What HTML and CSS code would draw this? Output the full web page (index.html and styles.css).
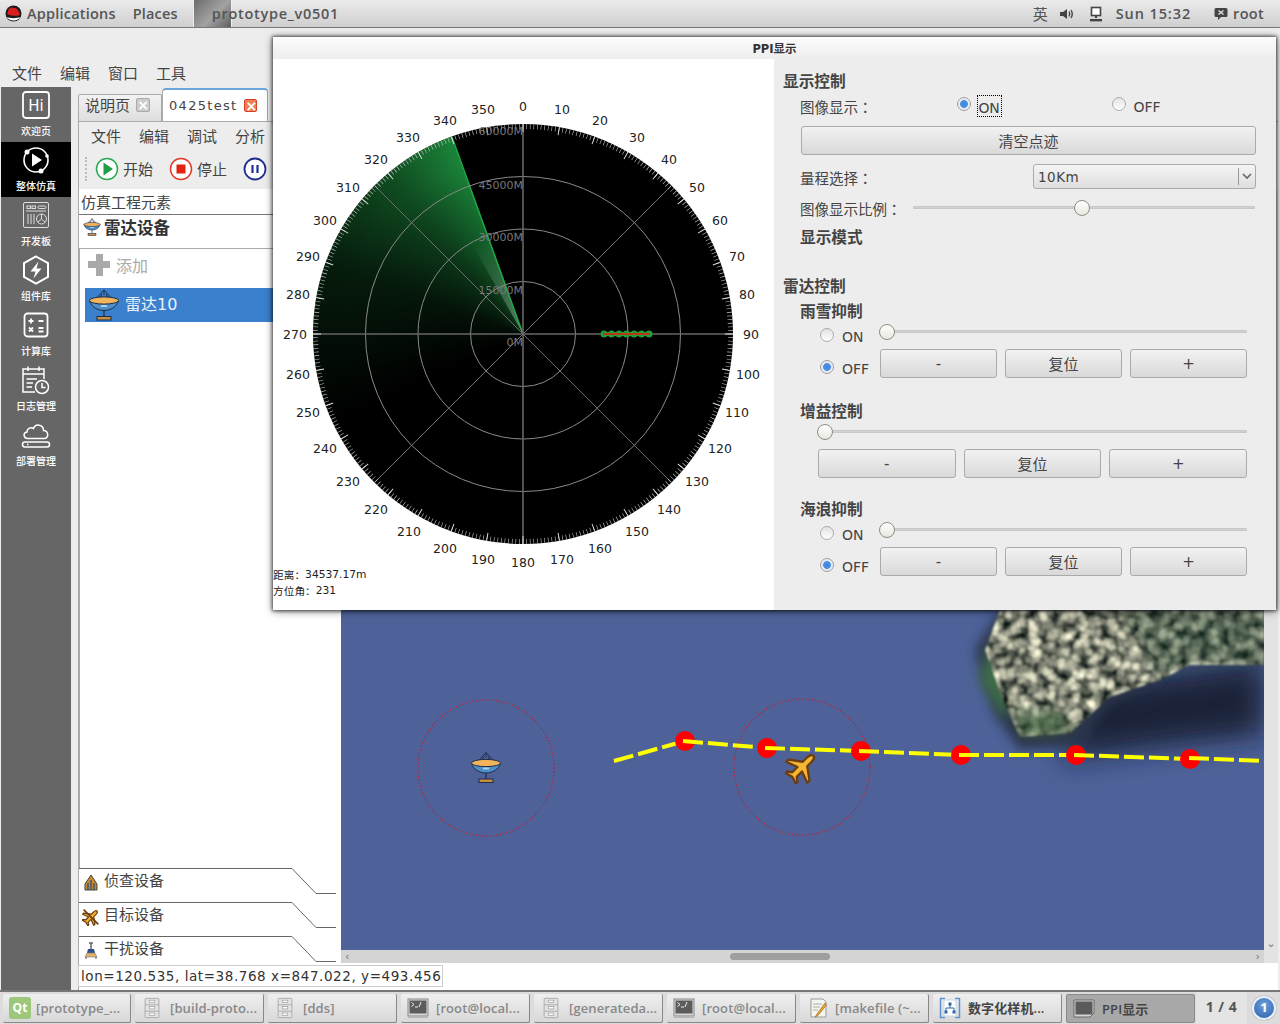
FILE: index.html
```html
<!DOCTYPE html>
<html lang="zh">
<head>
<meta charset="utf-8">
<title>PPI显示</title>
<link rel="stylesheet" href="styles.css">
</head>
<body>
<svg class="defs" width="0" height="0">
  <defs>
    <symbol id="dish" viewBox="0 0 32 32">
      <path d="M16 1L7 11M16 1L25 11M16 1V6M11 11L14 5M21 11L18 5" fill="none" stroke="#1d2d4a" stroke-width="1"/>
      <path d="M1.5 11.5C3 18 10 21.5 16 21.5S29 18 30.5 11.5Z" fill="#4d8fc7" stroke="#1d2d4a"/>
      <ellipse cx="16" cy="11.5" rx="14.5" ry="3.6" fill="#f2b35a" stroke="#1d2d4a"/>
      <rect x="13" y="16" width="6" height="2" fill="#a9d0ee"/>
      <path d="M16 21.5V28" stroke="#1d2d4a" stroke-width="1.2"/>
      <rect x="9" y="27.5" width="14" height="3.5" fill="#c88f3e" stroke="#1d2d4a"/>
    </symbol>
    <symbol id="plane" viewBox="0 0 32 32">
      <path transform="rotate(45 16 16)" d="M16 1C18 1 19 4 19 7V12L30 20V23L19 19V26L23 29V31L16 29L9 31V29L13 26V19L2 23V20L13 12V7C13 4 14 1 16 1Z" fill="#f5b632" stroke="#6b3d10" stroke-width="2.200" stroke-linejoin="round"/>
    </symbol>
    <symbol id="cabinet" viewBox="0 0 18 24">
      <rect x="1.5" y="1.5" width="15" height="21" rx="1" fill="#e4e4e4" stroke="#a8a8a8"/>
      <path d="M1.5 8.5H16.5M1.5 15.5H16.5" stroke="#a8a8a8"/>
      <rect x="6" y="3.5" width="6" height="2.5" fill="#fff" stroke="#a0a0a0" stroke-width=".8"/>
      <rect x="6" y="10.5" width="6" height="2.5" fill="#fff" stroke="#a0a0a0" stroke-width=".8"/>
      <rect x="6" y="17.5" width="6" height="2.5" fill="#fff" stroke="#a0a0a0" stroke-width=".8"/>
    </symbol>
    <symbol id="term" viewBox="0 0 22 22">
      <rect x="1" y="2" width="20" height="17" fill="#d8d8d8" stroke="#888"/>
      <rect x="2.5" y="3.5" width="17" height="13" fill="#5c5c5c"/>
      <path d="M4.5 5.5L7 7.5L4.5 9.5M8 10H11M14 5L12 10" stroke="#eee" fill="none"/>
      <rect x="1" y="19" width="20" height="2" fill="#b5b5b5"/>
    </symbol>
  </defs>
</svg>

<header class="topbar">
  <svg class="redhat" width="17" height="17" viewBox="0 0 17 17"><circle cx="8.500" cy="8.500" r="8" fill="#1c1c1c"/><path d="M1.500 12C4 16.500 13 16.500 15.500 12C12 13.500 5 13.500 1.500 12Z" fill="#fff"/><path d="M2.500 9.500C2.500 6 4 2.500 6.500 2.500C7.500 2.500 8 3 9.500 3C12 2.500 13.500 6.500 15 9C15.500 11 9 11.500 2.500 9.500Z" fill="#d9201f"/></svg>
  <span class="topbar-menu topbar-apps">Applications</span>
  <span class="topbar-menu topbar-places">Places</span>
  <span class="topbar-thumb"></span>
  <span class="topbar-title">prototype_v0501</span>
  <span class="topbar-spacer"></span>
  <span class="tray-ime">英</span>
  <svg class="tray-sound" width="16" height="14" viewBox="0 0 16 14"><path d="M1 5H4L8 2V12L4 9H1Z" fill="#444"/><path d="M10 4.5Q11.5 7 10 9.5M12 3Q14.5 7 12 11" fill="none" stroke="#444" stroke-width="1.4"/></svg>
  <svg class="tray-net" width="14" height="16" viewBox="0 0 14 16"><rect x="2.5" y="1.5" width="9" height="8" fill="#fff" stroke="#444" stroke-width="1.6"/><path d="M7 10V12" stroke="#444" stroke-width="2"/><rect x="1" y="13" width="12" height="2.4" fill="#444"/></svg>
  <span class="tray-clock">Sun 15:32</span>
  <svg class="tray-chat" width="14" height="14" viewBox="0 0 14 14"><path d="M2 1H12Q13.500 1 13.500 2.500V8.500Q13.500 10 12 10H7L4 13V10H2Q.5 10 .5 8.500V2.500Q.5 1 2 1Z" fill="#444"/><path d="M4.500 3.500L9.500 7.500M9.500 3.500L4.500 7.500" stroke="#ddd" stroke-width="1.500"/></svg>
  <span class="tray-user">root</span>
</header>

<main class="appwin">
  <nav class="menubar"><span>文件</span><span>编辑</span><span>窗口</span><span>工具</span></nav>
  <div class="appbody">
    <aside class="sidebar">
      <div class="side-item">
        <svg class="side-icon" viewBox="0 0 30 30"><rect x="2" y="2" width="26" height="26" rx="3" fill="none" stroke="#fff" stroke-width="1.800"/><text x="15" y="20.500" class="hi-text">Hi</text></svg>
        <span>欢迎页</span>
      </div>
      <div class="side-item side-item-active">
        <svg class="side-icon" viewBox="0 0 30 30"><circle cx="15" cy="15" r="12" fill="none" stroke="#fff" stroke-width="1.600"/><path d="M11 8.500L21 15L11 21.500Z" fill="#fff"/><circle cx="6" cy="7" r="2.500" fill="#fff"/><circle cx="26" cy="11" r="1.800" fill="#fff"/><circle cx="20" cy="26" r="2.500" fill="#fff"/></svg>
        <span>整体仿真</span>
      </div>
      <div class="side-item">
        <svg class="side-icon" viewBox="0 0 30 30" fill="none" stroke="#ddd"><rect x="2.500" y="2.500" width="25" height="25" rx="1.500"/><rect x="6" y="6" width="3.500" height="2.500"/><rect x="11" y="6" width="3.500" height="2.500"/><rect x="17" y="6" width="8" height="2.500" rx="1.200"/><path d="M5 11H25M7 14V24M10 14V24M13 14V24"/><circle cx="20.500" cy="19" r="5"/><path d="M20.500 14V19L24 22M20.500 19L17 22"/></svg>
        <span>开发板</span>
      </div>
      <div class="side-item">
        <svg class="side-icon" viewBox="0 0 30 30"><path d="M15 1.500L27 8.200V21.800L15 28.500L3 21.800V8.200Z" fill="none" stroke="#fff" stroke-width="2"/><path d="M17.500 6.500L9.500 16.500H14.500L12.500 23.500L20.500 13.500H15.500Z" fill="#fff"/></svg>
        <span>组件库</span>
      </div>
      <div class="side-item">
        <svg class="side-icon" viewBox="0 0 30 30" fill="none" stroke="#fff" stroke-width="1.800"><rect x="3.500" y="3.500" width="23" height="23" rx="3"/><path d="M7.500 11H12.500M10 8.500V13.500M17.500 11H22.500M8 17.500L12 21.500M12 17.500L8 21.500M17.500 18H22.500M17.500 21.500H22.500"/></svg>
        <span>计算库</span>
      </div>
      <div class="side-item">
        <svg class="side-icon" viewBox="0 0 30 30" fill="none" stroke="#fff" stroke-width="1.500"><path d="M23 14V4H2V27H14"/><path d="M2 9H23M7 1.500V6M18 1.500V6M5.500 14H16M5.500 18H12M5.500 22H11"/><circle cx="21" cy="22" r="6.500"/><path d="M21 18V22.500H24.500"/></svg>
        <span>日志管理</span>
      </div>
      <div class="side-item">
        <svg class="side-icon" viewBox="0 0 30 30" fill="none" stroke="#fff" stroke-width="1.500"><path d="M7 18.500C2.500 18.500 1.500 13 6 12C6 8.500 10 6.500 12.500 8.500C14.500 3 22.500 4.500 22.500 10.500C27.500 10.500 28.500 18.500 23 18.500Z"/><rect x="1.500" y="22" width="27" height="5" rx="2.500"/><path d="M6 24.500H7.500"/></svg>
        <span>部署管理</span>
      </div>
    </aside>

    <section class="workspace">
      <div class="tabs">
        <div class="tab"><span>说明页</span><span class="tab-close"></span></div>
        <div class="tab tab-active"><span class="tab-name">0425test</span><span class="tab-close tab-close-hot"></span></div>
      </div>
      <div class="tabpanel">
        <nav class="submenu"><span>文件</span><span>编辑</span><span>调试</span><span>分析</span></nav>
        <div class="toolbar">
          <span class="grip"></span>
          <svg class="tool-icon" viewBox="0 0 24 24"><circle cx="12" cy="12" r="10.500" fill="#fff" stroke="#2aa952" stroke-width="1.500"/><path d="M8.500 5.500L18 12L8.500 18.500Z" fill="#1f9e46"/></svg>
          <span class="tool-label">开始</span>
          <svg class="tool-icon tool-stop" viewBox="0 0 24 24"><circle cx="12" cy="12" r="10.500" fill="#fff" stroke="#e23b2a" stroke-width="1.500"/><rect x="7.500" y="7.500" width="9" height="9" fill="#e0240f"/></svg>
          <span class="tool-label">停止</span>
          <svg class="tool-icon tool-pause" viewBox="0 0 24 24"><circle cx="12" cy="12" r="10.500" fill="#fff" stroke="#1f2f8f" stroke-width="1.800"/><path d="M9.500 8V16M14.500 8V16" stroke="#1f2f8f" stroke-width="2.200"/></svg>
        </div>
        <div class="split">
          <div class="tree">
            <div class="tree-title">仿真工程元素</div>
            <div class="tree-head"><svg class="tree-head-icon"><use href="#dish"/></svg><b>雷达设备</b></div>
            <div class="tree-list">
              <div class="tree-add"><span class="plus"></span><span>添加</span></div>
              <div class="tree-row"><svg class="tree-row-icon"><use href="#dish"/></svg><span>雷达10</span></div>
            </div>
            <div class="drawer">
              <svg class="drawer-line" viewBox="0 0 257 26"><path d="M0 .5H213L237 25.500H257" fill="none" stroke="#666"/></svg>
              <svg class="drawer-icon" viewBox="0 0 18 18"><path d="M9 1L15 10V16H3V10Z" fill="#c98a2a" stroke="#444"/><path d="M6 9V16M9 6V16M12 9V16" stroke="#2d4f86" stroke-width="1.300"/></svg>
              <span>侦查设备</span>
            </div>
            <div class="drawer">
              <svg class="drawer-line" viewBox="0 0 257 26"><path d="M0 .5H213L237 25.500H257" fill="none" stroke="#666"/></svg>
              <svg class="drawer-icon" viewBox="0 0 32 32"><use href="#plane"/><path d="M3 3L29 29" stroke="#6b3d10" stroke-width="3"/></svg>
              <span>目标设备</span>
            </div>
            <div class="drawer drawer-last">
              <svg class="drawer-line" viewBox="0 0 257 26"><path d="M0 .5H213L237 25.500H257" fill="none" stroke="#666"/></svg>
              <svg class="drawer-icon" viewBox="0 0 18 18"><path d="M9 1V7M7 1H11" stroke="#666" stroke-width="1.500"/><path d="M6 7H12L13 11H5Z" fill="#2d4f86"/><path d="M3 15H15L13 11H5Z" fill="#e4b169" stroke="#777" stroke-width=".6"/><path d="M4 15V17M14 15V17" stroke="#555"/></svg>
              <span>干扰设备</span>
            </div>
          </div>
          <div class="mapwrap">
            <svg class="map" viewBox="341 189 923 761" preserveAspectRatio="none">
              <defs>
                <filter id="blur14" x="-30%" y="-30%" width="160%" height="160%"><feGaussianBlur stdDeviation="14"/></filter>
                <filter id="blur6" x="-30%" y="-30%" width="160%" height="160%"><feGaussianBlur stdDeviation="6"/></filter>
                <filter id="land" x="-5%" y="-5%" width="110%" height="110%" color-interpolation-filters="sRGB">
                  <feTurbulence type="fractalNoise" baseFrequency=".1" numOctaves="3" seed="23" result="n"/>
                  <feColorMatrix in="n" type="matrix" values="1.800 0 0 0 -.5  1.700 0 0 0 -.43  1.500 0 0 0 -.38  0 0 0 0 1"/>
                  <feMorphology operator="dilate" radius="1"/>
                  <feComposite in2="SourceGraphic" operator="in"/>
                  <feGaussianBlur stdDeviation="1"/>
                </filter>
              </defs>
              <rect x="341" y="189" width="923" height="761" fill="#4e6299"/>
              <path d="M1090 685L1264 660V735L1170 745L1060 760Z" fill="#161b2e" opacity=".9" filter="url(#blur14)"/>
              <path d="M1000 610L975 650L995 715L1020 750L1075 745L1110 700L1160 680V610Z" fill="#2c3648" filter="url(#blur6)"/>
              <path d="M990 645L978 680L1005 720L1015 690Z" fill="#3c6a4a" filter="url(#blur6)"/>
              <path d="M1000 610L985 650L1003 700L1020 737L1070 733L1110 697L1160 680L1190 665H1264V610Z" fill="#777" filter="url(#land)"/>
              <path d="M1125 610H1264V665H1190L1160 675Z" fill="#24402f" opacity=".45" filter="url(#blur6)"/>
              <path d="M1012 712L1024 738L1070 732L1062 712Z" fill="#3b5e3c" opacity=".7" filter="url(#blur6)"/>
              <circle class="range" cx="486" cy="768" r="68"/>
              <circle class="range" cx="802" cy="767" r="68"/>
              <use href="#dish" x="470" y="751" width="32" height="33"/>
              <use href="#plane" x="785" y="750" width="34" height="34"/>
              <path class="route" d="M614 761L685 741"/>
              <circle class="way" cx="685" cy="741" r="10"/>
              <path class="route" d="M683 741L767 748"/>
              <circle class="way" cx="767" cy="748" r="10"/>
              <path class="route" d="M765 748L861 751"/>
              <circle class="way" cx="861" cy="751" r="10"/>
              <path class="route" d="M859 751L961 755"/>
              <circle class="way" cx="961" cy="755" r="10"/>
              <path class="route" d="M959 755L1076 755"/>
              <circle class="way" cx="1076" cy="755" r="10"/>
              <path class="route" d="M1074 755L1190 759"/>
              <circle class="way" cx="1190" cy="759" r="10"/>
              <path class="route" d="M1189 758L1264 761"/>
            </svg>
            <div class="vscroll"><span class="chev">⌄</span></div>
            <div class="hscroll"><span class="hchev">‹</span><span class="hthumb"></span><span class="hchev">›</span></div>
            <div class="corner"></div>
          </div>
        </div>
        <div class="statusrow"><div class="statusbox">lon=120.535, lat=38.768 x=847.022, y=493.456</div></div>
      </div>
    </section>
  </div>
</main>

<footer class="taskbar">
  <div class="task"><span class="qt">Qt</span><span class="task-text">[prototype_...</span></div>
  <div class="task"><svg class="task-icon"><use href="#cabinet"/></svg><span class="task-text">[build-proto...</span></div>
  <div class="task"><svg class="task-icon"><use href="#cabinet"/></svg><span class="task-text">[dds]</span></div>
  <div class="task"><svg class="task-icon"><use href="#term"/></svg><span class="task-text">[root@local...</span></div>
  <div class="task"><svg class="task-icon"><use href="#cabinet"/></svg><span class="task-text">[generateda...</span></div>
  <div class="task"><svg class="task-icon"><use href="#term"/></svg><span class="task-text">[root@local...</span></div>
  <div class="task"><svg class="task-icon" viewBox="0 0 22 22"><path d="M5 2H17L20 5V20H5Z" fill="#f5f5f0" stroke="#999"/><path d="M7 7H16M7 10H14M7 13H12" stroke="#aaa"/><path d="M19 6L11 17L9 20L12 18.500L20.500 8Z" fill="#e9a33a" stroke="#a26a1c" stroke-width=".7"/></svg><span class="task-text">[makefile (~...</span></div>
  <div class="task"><svg class="task-icon" viewBox="0 0 22 22" fill="none"><path d="M6 1.500H1.500V20.500H6M16 1.500H20.500V20.500H16" stroke="#5d93cf" stroke-width="1.500"/><rect x="5" y="3" width="12" height="16" fill="#fff" stroke="#c9d6e6"/><path d="M11 7V11M7 14V11H15V14" stroke="#2f66a8"/><rect x="9.500" y="5.500" width="3" height="3" fill="#2f66a8"/><rect x="5.500" y="13.500" width="3" height="3" fill="#2f66a8"/><rect x="13.500" y="13.500" width="3" height="3" fill="#2f66a8"/></svg><span class="task-text task-text-dark">数字化样机...</span></div>
  <div class="task task-active"><svg class="task-icon" viewBox="0 0 22 22"><path d="M1 3H21V16L17 20H1Z" fill="#d5d5d5" stroke="#666"/><rect x="2.500" y="4.500" width="17" height="13" fill="#5a5a5a"/></svg><span class="task-text task-text-dark">PPI显示</span></div>
  <div class="pager">1 / 4</div>
  <div class="badge">1</div>
</footer>

<div class="dialog">
  <div class="dialog-title">PPI显示</div>
  <div class="dialog-body">
    <svg class="radar" viewBox="273 59 501 551">
      <defs>
        <linearGradient id="glow" gradientUnits="userSpaceOnUse" x1="523" y1="334" x2="488" y2="240">
          <stop offset="0" stop-color="#cfeeda" stop-opacity=".4"/>
          <stop offset="1" stop-color="#cfeeda" stop-opacity="0"/>
        </linearGradient>
      </defs>
      <circle cx="523" cy="334" r="210" fill="#000"/>
      <foreignObject x="313" y="124" width="420" height="420"><div class="sweep"></div></foreignObject>
      <path d="M523 334L488 238L472 244Z" fill="url(#glow)"/>
      <path d="M523 334L452 137" stroke="#1fa94a" stroke-width="1.500"/>
      <g class="rings">
        <circle cx="523" cy="334" r="52.500"/>
        <circle cx="523" cy="334" r="105"/>
        <circle cx="523" cy="334" r="157.500"/>
      </g>
      <g class="spokes">
        <path d="M374.500 185.500L671.500 482.500M671.500 185.500L374.500 482.500"/>
      </g>
      <path class="axis" d="M523 124V544M313 334H733"/>
      <circle class="ticks" cx="523" cy="334" r="207.500" pathLength="360"/>
      <circle class="ticks-major" cx="523" cy="334" r="206" pathLength="36"/>
      <g class="dist">
        <text x="523" y="131">60000M</text>
        <text x="523" y="185">45000M</text>
        <text x="523" y="237">30000M</text>
        <text x="523" y="290">15000M</text>
        <text x="523" y="342">0M</text>
      </g>
      <path class="trace-g" d="M604 334H649"/>
      <g class="trace-dots">
        <circle cx="604" cy="334" r="3.500"/><circle cx="611.500" cy="334" r="3.500"/><circle cx="619" cy="334" r="3.500"/><circle cx="626.500" cy="334" r="3.500"/><circle cx="634" cy="334" r="3.500"/><circle cx="641.500" cy="334" r="3.500"/><circle cx="649" cy="334" r="3.500"/>
      </g>
      <path class="trace-r" d="M603 334H650"/>
      <g class="deg">
        <text x="523" y="106">0</text><text x="562" y="109">10</text><text x="600" y="120">20</text><text x="637" y="137">30</text>
        <text x="669" y="159">40</text><text x="697" y="187">50</text><text x="720" y="220">60</text><text x="737" y="256">70</text>
        <text x="747" y="294">80</text><text x="751" y="334">90</text><text x="748" y="374">100</text><text x="737" y="412">110</text>
        <text x="720" y="448">120</text><text x="697" y="481">130</text><text x="669" y="509">140</text><text x="637" y="531">150</text>
        <text x="600" y="548">160</text><text x="562" y="559">170</text><text x="523" y="562">180</text><text x="483" y="559">190</text>
        <text x="445" y="548">200</text><text x="409" y="531">210</text><text x="376" y="509">220</text><text x="348" y="481">230</text>
        <text x="325" y="448">240</text><text x="308" y="412">250</text><text x="298" y="374">260</text><text x="295" y="334">270</text>
        <text x="298" y="294">280</text><text x="308" y="256">290</text><text x="325" y="220">300</text><text x="348" y="187">310</text>
        <text x="376" y="159">320</text><text x="408" y="137">330</text><text x="445" y="120">340</text><text x="483" y="109">350</text>
      </g>
      <text class="readout" x="273" y="574"><tspan class="readout-cn">距离：</tspan>34537.17m</text>
      <text class="readout" x="273" y="590"><tspan class="readout-cn">方位角：</tspan>231</text>
    </svg>

    <div class="controls">
      <h3 class="h-main h-first">显示控制</h3>
      <div class="row-image">
        <span class="label" lang="zh-TW">图像显示：</span>
        <span class="radio radio-on radio-a"></span>
        <span class="focus-on">ON</span>
        <span class="radio radio-b"></span>
        <span class="opt-off">OFF</span>
      </div>
      <button class="btn btn-clear">清空点迹</button>
      <div class="row-range">
        <span class="label" lang="zh-TW">量程选择：</span>
        <div class="combo"><span class="combo-value">10Km</span><span class="combo-arrow"><svg width="10" height="7" viewBox="0 0 10 7"><path d="M1 1L5 5L9 1" fill="none" stroke="#666" stroke-width="1.600"/></svg></span></div>
      </div>
      <div class="row-ratio">
        <span class="label" lang="zh-TW">图像显示比例：</span>
        <div class="slider slider-ratio"><span class="thumb" style="left:161px"></span></div>
      </div>
      <h4 class="h-sub h-mode">显示模式</h4>

      <h3 class="h-main h-radar">雷达控制</h3>
      <h4 class="h-sub h-rain">雨雪抑制</h4>
      <div class="ctl-grid">
        <div class="opt opt-top"><span class="radio"></span><span class="opt-text">ON</span></div>
        <div class="slider slider-wide"><span class="thumb" style="left:-1px"></span></div>
        <div class="opt opt-bottom"><span class="radio radio-on"></span><span class="opt-text">OFF</span></div>
        <div class="btn-row"><button class="btn">-</button><button class="btn">复位</button><button class="btn">+</button></div>
      </div>

      <h4 class="h-sub h-gain">增益控制</h4>
      <div class="gain">
        <div class="slider slider-gain"><span class="thumb" style="left:-1px"></span></div>
        <div class="btn-row"><button class="btn">-</button><button class="btn">复位</button><button class="btn">+</button></div>
      </div>

      <h4 class="h-sub h-wave">海浪抑制</h4>
      <div class="ctl-grid">
        <div class="opt opt-top"><span class="radio"></span><span class="opt-text">ON</span></div>
        <div class="slider slider-wide"><span class="thumb" style="left:-1px"></span></div>
        <div class="opt opt-bottom"><span class="radio radio-on"></span><span class="opt-text">OFF</span></div>
        <div class="btn-row"><button class="btn">-</button><button class="btn">复位</button><button class="btn">+</button></div>
      </div>
    </div>
  </div>
</div>
</body>
</html>
```
FILE: styles.css
```css
* { box-sizing: border-box; }
html, body { margin: 0; padding: 0; }
body {
  width: 1280px; height: 1024px; overflow: hidden; position: relative;
  display: flex; flex-direction: column;
  font-family: "DejaVu Sans", "Noto Sans CJK SC", sans-serif;
  font-size: 15px; color: #444; background: #ededed;
}
.defs { position: absolute; }

/* top bar */
.topbar {
  height: 28px; flex: none; display: flex; align-items: center;
  background: linear-gradient(#ebebeb, #cfcfcf); border-bottom: 1px solid #777;
  font-family: "Open Sans", "Noto Sans CJK SC", sans-serif; font-weight: 600; font-size: 14.500px; color: #555;
}
.redhat { margin-left: 5px; flex: none; }
.topbar-apps { margin-left: 5px; letter-spacing: .2px; }
.topbar-places { margin-left: 17px; letter-spacing: .2px; }
.topbar-thumb {
  width: 39px; height: 27px; margin-left: 15px; flex: none;
  background: linear-gradient(135deg, #6c6c6c, #a2a2a2 55%, #5e5e5e);
  border-left: 1px solid #eee; border-right: 1px solid #eee;
}
.topbar-title { margin-left: -20px; letter-spacing: .7px; }
.topbar-spacer { flex: 1; }
.tray-ime { width: 16px; font-size: 15px; font-weight: 400; margin-right: 10px; }
.tray-sound { margin-right: 14px; }
.tray-net { margin-right: 13px; }
.tray-clock { letter-spacing: .9px; margin-right: 23px; }
.tray-chat { margin-right: 5px; }
.tray-user { margin-right: 16px; letter-spacing: .3px; }

/* application window */
.appwin { height: 962px; flex: none; display: flex; flex-direction: column; background: #ededed; }
.menubar { height: 59px; flex: none; display: flex; align-items: flex-end; gap: 18px; padding: 0 0 3px 12px; line-height: 20px; }
.appbody { flex: 1; display: flex; min-height: 0; }

.sidebar { width: 70px; margin-left: 1px; flex: none; background: #666; color: #fff; font-size: 10px; }
.side-item { height: 55px; display: flex; flex-direction: column; align-items: center; padding-top: 3px; }
.side-item span { margin-top: 5px; line-height: 14px; font-weight: 500; }
.side-item-active { background: #000; }
.side-icon { width: 30px; height: 30px; display: block; }
.hi-text { fill: #fff; font-size: 15px; font-weight: 400; text-anchor: middle; font-family: "DejaVu Sans", sans-serif; }

.workspace { margin: 0 2px 0 7px; flex: 1; min-width: 0; display: flex; flex-direction: column; }
.tabs { height: 34px; flex: none; display: flex; align-items: flex-end; }
.tab {
  width: 84px; height: 27px; display: flex; align-items: center; gap: 6px; padding: 0 0 7px 6px;
  background: linear-gradient(#f2f2f2, #dedede); border: 1px solid #aaa; border-bottom: 0; border-radius: 2px 2px 0 0;
}
.tab-active {
  width: 106px; height: 33px; background: #fff; border-top: 2px solid #6aa5dc; border-color: #6aa5dc #aaa transparent #aaa;
  padding: 0 0 0 6px; gap: 7px; border-radius: 4px 4px 0 0;
}
.tab-name { font-size: 13px; letter-spacing: 1.300px; }
.tab-close { width: 14px; height: 14px; flex: none; border: 1px solid #aaa; border-radius: 2px; background: #ccc; position: relative; }
.tab-close::before { content: "×"; position: absolute; inset: 0; text-align: center; color: #fff; font-size: 14px; line-height: 12px; font-weight: 700; }
.tab-close-hot { width: 13px; height: 13px; background: #ee8058; border-color: #d9402a; }

.tabpanel { flex: 1; min-height: 0; display: flex; flex-direction: column; background: #fff; border-left: 1px solid #aaa; border-top: 1px solid #aaa; }
.submenu { height: 28px; flex: none; display: flex; align-items: center; gap: 18px; padding: 0 0 2px 12px; background: #ededed; }
.toolbar { height: 39px; flex: none; display: flex; align-items: center; padding-bottom: 2px; background: #ededed; }
.grip { width: 2px; height: 24px; margin-left: 6px; border-left: 2px dotted #bbb; }
.tool-icon { width: 24px; height: 24px; margin-left: 8px; flex: none; }
.tool-label { margin-left: 4px; }
.tool-stop { margin-left: 16px; }
.tool-pause { margin-left: 16px; }

.split { flex: 1; min-height: 0; display: flex; }
.tree { width: 256px; flex: none; display: flex; flex-direction: column; position: relative; }
.tree-title { height: 26px; flex: none; line-height: 26px; padding: 1px 0 0 2px; border-bottom: 1px solid #777; }
.tree-head { height: 33px; flex: none; display: flex; align-items: center; gap: 3px; padding: 0 0 9px 4px; font-size: 16.500px; color: #333; }
.tree-head-icon { width: 18px; height: 18px; }
.tree-list { flex: 1; min-height: 0; border-top: 1px solid #aaa; border-left: 1px solid #aaa; padding-top: 1px; }
.tree-add { height: 38px; display: flex; align-items: center; gap: 6px; padding: 0 0 9px 8px; color: #aaa; font-size: 16px; }
.plus { width: 22px; height: 22px; background: linear-gradient(#aaa, #aaa) center/22px 7px no-repeat, linear-gradient(#aaa, #aaa) center/7px 22px no-repeat; }
.tree-row { height: 34px; margin-left: 5px; display: flex; align-items: center; gap: 5px; padding-left: 3px; background: #3a80cc; color: #e8f1fb; font-size: 16px; }
.tree-row span { padding-bottom: 5px; }
.tree-row-icon { width: 32px; height: 32px; }

.drawer { height: 34px; flex: none; position: relative; display: flex; align-items: flex-start; gap: 4px; padding: 3px 0 0 3px; line-height: 20px; background: #fff; }
.drawer-last { height: 27px; }
.drawer-line { position: absolute; left: 0; top: 0; width: 257px; height: 26px; }
.drawer-icon { width: 18px; height: 18px; flex: none; margin-top: 3px; }

.mapwrap { margin-left: 6px; flex: 1; min-width: 0; display: grid; grid-template-columns: 923px 1fr; grid-template-rows: 761px 13px; }
.map { width: 923px; height: 761px; display: block; }
.range { fill: none; stroke: #e0101a; stroke-width: 1.100; stroke-dasharray: 1.200 2.200; }
.way { fill: #f00; }
.route { fill: none; stroke: #ff0; stroke-width: 4; stroke-dasharray: 20 5; }
.vscroll { background: #e3e3e3; display: flex; align-items: flex-end; justify-content: center; color: #777; font-size: 11px; line-height: 12px; }
.hscroll { background: #d4d4d4; display: flex; align-items: center; justify-content: space-between; padding: 0 4px; color: #777; font-size: 11px; position: relative; }
.hthumb { position: absolute; left: 389px; top: 3px; width: 100px; height: 7px; border-radius: 4px; background: #9f9f9f; }
.corner { background: #e3e3e3; }

.statusrow { height: 27px; flex: none; background: #fff; padding-top: 2px; }
.statusbox { width: 365px; height: 22px; margin-left: -1px; border: 1px solid #ccc; line-height: 21px; padding-left: 2px; font-size: 13.500px; letter-spacing: .57px; color: #333; white-space: nowrap; }

/* taskbar */
.taskbar {
  height: 34px; flex: none; display: flex; align-items: center; gap: 4px; padding: 0 0 0 4px;
  background: #dcdcdc; border-top: 2px solid #777;
  font-family: "Open Sans", "Noto Sans CJK SC", sans-serif; font-size: 13px; font-weight: 600;
}
.task {
  width: 129px; height: 29px; flex: none; display: flex; align-items: center; gap: 7px; padding-left: 6px;
  background: linear-gradient(#efefef, #d8d8d8); border-right: 1px solid #888; border-bottom: 1px solid #888; border-radius: 2px;
  white-space: nowrap; overflow: hidden;
}
.task:first-child { width: 128px; margin-left: -1px; gap: 5px; }
.task-active { background: #a8a8a8; border: 1px solid #8a8a8a; }
.task-icon { width: 22px; height: 22px; flex: none; }
.task-text { color: #888; letter-spacing: .1px; }
.task-text-dark { color: #444; }
.qt { width: 22px; height: 22px; flex: none; background: #9dc77a; color: #fff; border-radius: 3px; text-align: center; line-height: 21px; font-size: 12px; font-weight: 700; }
.pager { width: 51px; margin-left: -3px; height: 32px; line-height: 30px; text-align: center; font-weight: 700; font-size: 14px; color: #555; background: #e4e4e4; letter-spacing: .5px; }
.badge { width: 24px; height: 24px; margin-left: 1px; border-radius: 50%; background: radial-gradient(circle at 50% 35%, #6ea0da, #2a5fae); border: 2px solid #e9f0f8; box-shadow: 0 0 1px #555; color: #fff; text-align: center; line-height: 19px; font-size: 13px; font-weight: 700; flex: none; }

/* floating dialog window */
.dialog {
  position: absolute; left: 273px; top: 37px; width: 1003px; height: 573px;
  display: flex; flex-direction: column; background: #ededed;
  box-shadow: 0 0 3px 1px rgba(0,0,0,.55), 0 1px 8px rgba(0,0,0,.55);
}
.dialog-title { height: 22px; flex: none; text-align: center; line-height: 22px; padding-top: 1px; font-size: 11.500px; font-weight: 700; color: #333; background: linear-gradient(#fcfcfc, #ededed); }
.dialog-body { flex: 1; min-height: 0; display: flex; }
.radar { width: 501px; height: 551px; flex: none; background: #fff; display: block; }
.sweep {
  width: 420px; height: 420px; border-radius: 50%;
  background: conic-gradient(from 245deg, rgba(28,138,60,0) 0deg, rgba(28,138,60,.2) 45deg, rgba(28,138,60,.55) 75deg, rgba(28,138,60,.95) 95deg, transparent 95deg);
  -webkit-mask-image: radial-gradient(circle, rgba(0,0,0,.45) 0, #000 60%);
  mask-image: radial-gradient(circle, rgba(0,0,0,.45) 0, #000 60%);
}
.rings circle { fill: none; stroke: #8a8a8a; stroke-width: 1; }
.spokes path { fill: none; stroke: #6e6e6e; stroke-width: 1; }
.axis { fill: none; stroke: #666; stroke-width: 1.600; }
.ticks { fill: none; stroke: #c8c8c8; stroke-width: 5; stroke-dasharray: .16 .84; stroke-dashoffset: .08; }
.ticks-major { fill: none; stroke: #ddd; stroke-width: 8; stroke-dasharray: .026 .974; stroke-dashoffset: .013; }
.dist text { fill: #777; font-size: 11px; text-anchor: end; dominant-baseline: central; }
.deg text { fill: #222; font-size: 12.500px; text-anchor: middle; dominant-baseline: central; }
.readout { fill: #222; font-size: 10.700px; dominant-baseline: central; }
.readout-cn { font-family: "Noto Sans CJK TC", sans-serif; }
.trace-g { stroke: #1da13a; stroke-width: 4; stroke-linecap: round; fill: none; }
.trace-dots circle { fill: #1da13a; }
.trace-r { stroke: #f01008; stroke-width: 1.500; fill: none; }

.controls { flex: 1; min-width: 0; padding: 0 20px 0 9px; color: #444; font-size: 14.500px; }
.h-main, .h-sub { margin: 0; height: 20px; line-height: 22px; font-size: 15.700px; font-weight: 700; color: #444; }
.h-sub { margin-left: 17px; }
.h-first { margin-top: 12px; }
.label { line-height: 20px; white-space: nowrap; padding-top: 2px; font-family: "Noto Sans CJK TC", sans-serif; }

.row-image { height: 24px; margin: 3px 0 0 17px; display: flex; align-items: center; position: relative; }
.radio { width: 14px; height: 14px; flex: none; border-radius: 50%; border: 1px solid #aaa; background: linear-gradient(#e2e2e2, #fff); box-shadow: 0 0 1px #fff; }
.radio-on { border-color: #9c9c9c; background: radial-gradient(circle, #3f86e0 0, #4f92e6 42%, #dfe7ef 50%, #fff 100%); }
.radio-a { margin: -4px 0 0 84px; }
.focus-on { margin-left: 6px; width: 25px; height: 22px; border: 1px dotted #000; line-height: 22px; text-align: center; font-size: 14px; letter-spacing: -.3px; padding-top: 1px; }
.radio-b { margin: -4px 0 0 110px; }
.opt-off { margin-left: 8px; font-size: 14px; padding-top: 2px; }

.btn {
  display: block; height: 29px; padding: 0; font: inherit; font-size: 15px; color: #444;
  background: linear-gradient(#f2f2f2, #d9d9d9); border: 1px solid #aaa; border-radius: 3px;
}
.btn-clear { width: 455px; margin: 8px 0 0 18px; }

.row-range { height: 25px; margin: 9px 0 0 17px; display: flex; align-items: center; justify-content: space-between; }
.combo { width: 223px; height: 25px; display: flex; align-items: center; background: linear-gradient(#f5f5f5, #dedede); border: 1px solid #aaa; border-radius: 3px; }
.combo-value { flex: 1; padding-left: 4px; font-size: 13.500px; letter-spacing: .5px; }
.combo-arrow { width: 17px; height: 17px; border-left: 1px solid #999; display: flex; align-items: center; justify-content: center; }

.row-ratio { height: 24px; margin: 7px 0 0 17px; display: flex; align-items: center; justify-content: space-between; }
.slider { height: 20px; position: relative; flex: none; }
.slider::before { content: ""; position: absolute; left: 0; right: 0; top: 8px; height: 3px; border-radius: 2px; background: #d2d2d2; box-shadow: inset 0 0 0 1px #c8c8c8; }
.thumb { position: absolute; top: 2px; width: 16px; height: 16px; border-radius: 50%; border: 1px solid #8e8e80; background: linear-gradient(#fff, #e8e8e0); }
.slider-ratio { width: 342px; margin-right: 1px; }

.h-mode { margin-top: 7px; }
.h-radar { margin-top: 29px; }
.h-rain { margin-top: 5px; }
.h-gain { margin-top: 23px; }
.h-wave { margin-top: 21px; }

.ctl-grid { margin: 0 9px 0 37px; padding-top: 1px; display: grid; grid-template-columns: 60px 1fr; grid-template-rows: 27px 29px; }
.opt { display: flex; align-items: center; gap: 8px; font-size: 14px; }
.opt-top { padding-bottom: 1px; }
.opt-bottom { padding-top: 7px; }
.opt-text { padding-top: 4px; }
.slider-wide { height: 20px; }
.btn-row { display: grid; grid-template-columns: repeat(3, 1fr); gap: 8px; }
.gain { margin: 1px 9px 0 35px; display: flex; flex-direction: column; gap: 7px; }
.slider-gain { width: 100%; }
```
